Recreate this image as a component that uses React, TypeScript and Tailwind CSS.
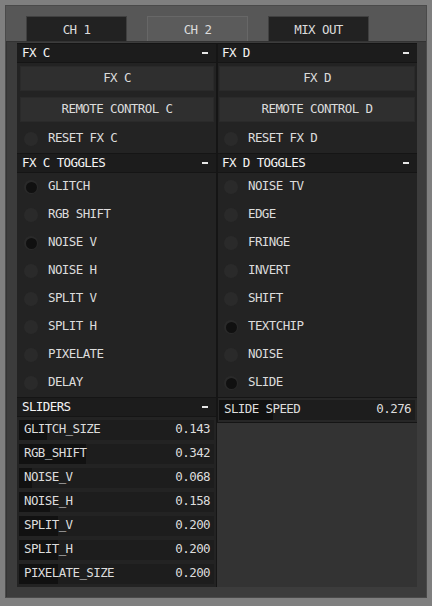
import React from 'react';

const leftToggles = [
  { label: 'GLITCH', on: true },
  { label: 'RGB SHIFT', on: false },
  { label: 'NOISE V', on: true },
  { label: 'NOISE H', on: false },
  { label: 'SPLIT V', on: false },
  { label: 'SPLIT H', on: false },
  { label: 'PIXELATE', on: false },
  { label: 'DELAY', on: false },
];

const rightToggles = [
  { label: 'NOISE TV', on: false },
  { label: 'EDGE', on: false },
  { label: 'FRINGE', on: false },
  { label: 'INVERT', on: false },
  { label: 'SHIFT', on: false },
  { label: 'TEXTCHIP', on: true },
  { label: 'NOISE', on: false },
  { label: 'SLIDE', on: true },
];

const sliders = [
  { label: 'GLITCH_SIZE', value: 0.143 },
  { label: 'RGB_SHIFT', value: 0.342 },
  { label: 'NOISE_V', value: 0.068 },
  { label: 'NOISE_H', value: 0.158 },
  { label: 'SPLIT_V', value: 0.2 },
  { label: 'SPLIT_H', value: 0.2 },
  { label: 'PIXELATE_SIZE', value: 0.2 },
];

function SectionHeader({ title, pl }: { title: string; pl: string }) {
  return (
    <div className={`flex h-[20px] items-center justify-between border-y border-[#151515] bg-[#1c1c1c] pr-[8px] text-[#f4f4f4] ${pl}`}>
      <span>{title}</span>
      <span className="h-[1.5px] w-[6px] bg-[#e6e6e6]" />
    </div>
  );
}

function Dot({ on }: { on: boolean }) {
  return (
    <div className="flex h-[14px] w-[14px] items-center justify-center rounded-full bg-[#2a2a2a]">
      {on && <div className="h-[11px] w-[11px] rounded-full bg-[#101010]" />}
    </div>
  );
}

function Toggle({ label, on, ml }: { label: string; on: boolean; ml: string }) {
  return (
    <div className={`flex h-[28px] items-center gap-[10px] ${ml}`}>
      <Dot on={on} />
      <span className="-mt-[1px]">{label}</span>
    </div>
  );
}

function Button({ label }: { label: string }) {
  return (
    <div className="flex h-[25px] items-center justify-center border border-[#2a2a2a] bg-[#2f2f2f]">
      {label}
    </div>
  );
}

function Slider({ label, value }: { label: string; value: number }) {
  return (
    <div className="relative flex h-[20px] items-center justify-between bg-[#1d1d1d] pl-[5px] pr-[4px]">
      <div className="absolute inset-y-0 left-0 bg-[#111111]" style={{ width: `${value * 100}%` }} />
      <span className="relative -mt-[1px]">{label}</span>
      <span className="relative -mt-[1px]">{value.toFixed(3)}</span>
    </div>
  );
}

function Tab({ label, active }: { label: string; active?: boolean }) {
  return (
    <div
      className={`flex h-[25px] w-[101px] items-center justify-center border border-b-0 pt-[2px] ${
        active ? 'border-[#676767] bg-[#5b5b5b]' : 'border-[#404040] bg-[#222222]'
      }`}
    >
      {label}
    </div>
  );
}

function FxColumn({
  letter,
  toggles,
  left,
}: {
  letter: string;
  toggles: { label: string; on: boolean }[];
  left: boolean;
}) {
  const pl = left ? 'pl-[5px]' : 'pl-[4px]';
  const ml = left ? 'ml-[7px]' : 'ml-[6px]';
  return (
    <>
      <SectionHeader title={`FX ${letter}`} pl={pl} />
      <div className={`pt-[3px] ${left ? 'pl-[3px] pr-[2px]' : 'pl-[1px] pr-[2px]'}`}>
        <Button label={`FX ${letter}`} />
        <div className="mt-[6px]">
          <Button label={`REMOTE CONTROL ${letter}`} />
        </div>
      </div>
      <div className={`mt-[3px] flex h-[28px] items-center gap-[10px] ${ml}`}>
        <Dot on={false} />
        <span className="-mt-[1px]">{`RESET FX ${letter}`}</span>
      </div>
      <SectionHeader title={`FX ${letter} TOGGLES`} pl={pl} />
      <div>
        {toggles.map((t) => (
          <Toggle key={t.label} label={t.label} on={t.on} ml={ml} />
        ))}
      </div>
    </>
  );
}

export default function App() {
  return (
    <div className="h-[606px] w-[432px] bg-[#7f7f7f] pl-[5px] pt-[5px] font-['DejaVu_Sans_Mono','Liberation_Mono',monospace] text-[12.5px] leading-none tracking-[-0.6px] text-[#dcdcdc]">
      <div className="flex h-[593px] w-[422px] flex-col border border-[#4a4a4a] bg-[#575757]">
        {/* Tabs */}
        <div className="flex h-[35px] items-end gap-[20px] pl-[20px]">
          <Tab label="CH 1" />
          <Tab label="CH 2" active />
          <Tab label="MIX OUT" />
        </div>

        {/* Content */}
        <div className="flex-1 border-l border-t border-[#333333] bg-[#3c3c3c] pb-[10px] pl-[10px] pr-[9px] pt-[1px]">
          <div className="flex h-full bg-[#333333]">
            {/* Left column */}
            <div className="flex w-[200px] flex-col border-r border-[#151515] bg-[#232323]">
              <FxColumn letter="C" toggles={leftToggles} left />
              <SectionHeader title="SLIDERS" pl="pl-[5px]" />
              <div className="flex flex-col gap-[4px] px-[2px] pt-[3px]">
                {sliders.map((s) => (
                  <Slider key={s.label} label={s.label} value={s.value} />
                ))}
              </div>
            </div>

            {/* Right column */}
            <div className="flex w-[200px] flex-col self-start border-l border-[#151515] bg-[#232323]">
              <FxColumn letter="D" toggles={rightToggles} left={false} />
              <div className="border-y border-[#151515] bg-[#272727] py-[2px] pl-[1px] pr-[2px]">
                <Slider label="SLIDE SPEED" value={0.276} />
              </div>
            </div>
          </div>
        </div>
      </div>
    </div>
  );
}
